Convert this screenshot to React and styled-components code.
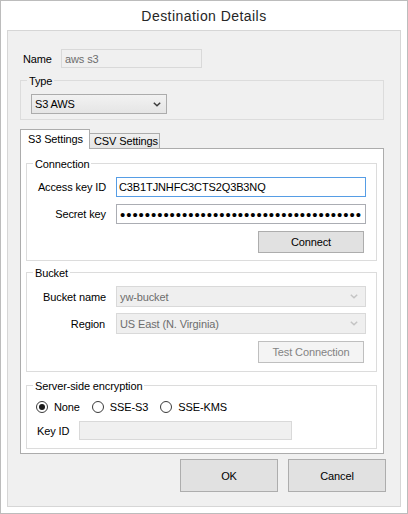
import React from 'react';
import styled, { createGlobalStyle } from 'styled-components';

const GlobalStyle = createGlobalStyle`
  html, body { margin: 0; padding: 0; background: #fff; }
  body {
    font-family: "Liberation Sans", Arial, sans-serif;
    font-size: 11px;
    letter-spacing: -0.12px;
    color: #000;
  }
  * { box-sizing: border-box; }
`;

const Window = styled.div`
  width: 408px;
  height: 514px;
  border: 1px solid #bcbcbc;
  background: #fff;
  display: flex;
  flex-direction: column;
`;

const TitleBar = styled.div`
  height: 29px;
  display: flex;
  align-items: center;
  justify-content: center;
  font-size: 14px;
  letter-spacing: 0.45px;
  color: #262626;
`;

const Body = styled.div`
  flex: 1;
  margin: 0 6px 6px;
  border: 1px solid #d6d6d6;
  background: #f0f0f0;
  display: flex;
  flex-direction: column;
  padding: 0 16px 0 12px;
`;

const NameRow = styled.div`
  display: flex;
  align-items: center;
  margin-top: 18px;
  padding-left: 3px;
`;

const NameLabel = styled.span`
  width: 38px;
`;

const TextBox = styled.div`
  width: ${p => p.$w}px;
  height: ${p => p.$h || 19}px;
  border: 1px solid ${p => (p.$focus ? '#569de5' : p.$disabled ? '#d9d9d9' : '#abadb3')};
  background: ${p => (p.$disabled ? '#f0f0f0' : '#fff')};
  color: ${p => (p.$disabled ? '#6d6d6d' : '#000')};
  display: flex;
  align-items: center;
  padding-left: ${p => p.$pl ?? 2}px;
  white-space: nowrap;
  overflow: hidden;
`;

const Dots = styled.span`
  font-size: 15px;
  letter-spacing: 0.95px;
  line-height: 1;
  margin-left: 1px;
`;

const Group = styled.fieldset`
  margin: ${p => p.$mt || 0}px 0 0;
  padding: 0;
  border: 1px solid #dcdcdc;
  min-width: 0;
`;

const Legend = styled.legend`
  margin-left: 6px;
  padding: 2px 2px 0;
  line-height: 14px;
  font-size: 11px;
`;

const GroupBody = styled.div`
  padding: ${p => p.$pad};
`;

const Select = styled.div`
  width: ${p => p.$w}px;
  height: ${p => p.$h}px;
  border: 1px solid ${p => (p.$disabled ? '#d9d9d9' : '#acacac')};
  background: ${p => (p.$disabled ? '#efefef' : 'linear-gradient(#f2f2f2, #e5e5e5)')};
  color: ${p => (p.$disabled ? '#6d6d6d' : '#000')};
  display: flex;
  align-items: center;
  justify-content: space-between;
  padding: 0 ${p => p.$pr || 5}px 0 3px;
  white-space: nowrap;
`;

const TabArea = styled.div`
  margin-top: 9px;
  display: flex;
  flex-direction: column;
`;

const TabStrip = styled.div`
  display: flex;
  align-items: flex-end;
  height: 19px;
`;

const Tab = styled.div`
  position: relative;
  z-index: ${p => (p.$active ? 1 : 0)};
  width: ${p => (p.$active ? 70 : 71)}px;
  height: ${p => (p.$active ? 20 : 15)}px;
  margin-bottom: ${p => (p.$active ? -1 : 0)}px;
  margin-left: ${p => (p.$active ? 0 : -1)}px;
  border: 1px solid #acacac;
  border-bottom: none;
  background: ${p => (p.$active ? '#fff' : 'linear-gradient(#f0f0f0, #e5e5e5)')};
  padding-left: ${p => (p.$active ? 7 : 4)}px;
  line-height: ${p => (p.$active ? 19 : 14)}px;
  white-space: nowrap;
`;

const TabPanel = styled.div`
  height: 306px;
  border: 1px solid #acacac;
  background: #fff;
  padding: 0 6px 0 5px;
  display: flex;
  flex-direction: column;
`;

const FormGrid = styled.div`
  display: grid;
  grid-template-columns: 79px 250px;
  column-gap: 10px;
  row-gap: ${p => p.$gap}px;
  align-items: center;
`;

const FieldLabel = styled.span`
  justify-self: end;
  margin-right: ${p => p.$mr || 0}px;
  white-space: nowrap;
`;

const Button = styled.div`
  width: ${p => p.$w}px;
  height: ${p => p.$h}px;
  border: 1px solid ${p => (p.$disabled ? '#bfbfbf' : '#adadad')};
  background: ${p => (p.$disabled ? '#f4f4f4' : '#e1e1e1')};
  color: ${p => (p.$disabled ? '#838383' : '#000')};
  display: flex;
  align-items: center;
  justify-content: center;
  white-space: nowrap;
`;

const GridButton = styled(Button)`
  grid-column: 2;
  justify-self: end;
  margin-right: 2px;
  margin-top: ${p => p.$mt || 0}px;
`;

const RadioRow = styled.div`
  display: flex;
  align-items: center;
  height: 14px;
  padding-left: 9px;
  gap: 12px;
`;

const RadioItem = styled.label`
  display: flex;
  align-items: center;
  gap: 6px;
`;

const RadioCircle = styled.span`
  width: 12px;
  height: 12px;
  border-radius: 50%;
  border: 1px solid #3a3a3a;
  background: #fff;
  display: flex;
  align-items: center;
  justify-content: center;
  &::after {
    content: '';
    display: ${p => (p.$checked ? 'block' : 'none')};
    width: 6px;
    height: 6px;
    border-radius: 50%;
    background: #1a1a1a;
  }
`;

const KeyRow = styled.div`
  display: flex;
  align-items: center;
  margin-top: 7px;
  padding-left: 10px;
`;

const KeyLabel = styled.span`
  width: 42px;
`;

const ButtonRow = styled.div`
  display: flex;
  justify-content: flex-end;
  gap: 10px;
  margin-top: 5px;
  margin-right: -2px;
`;

const Chevron = ({ color }) => (
  <svg width="8" height="5" viewBox="0 0 8 5">
    <path d="M0.8 0.8 L4 3.8 L7.2 0.8" fill="none" stroke={color} strokeWidth="1.5" />
  </svg>
);

const Radio = ({ checked, children }) => (
  <RadioItem>
    <RadioCircle $checked={checked} />
    <span>{children}</span>
  </RadioItem>
);

export default function App() {
  return (
    <>
      <GlobalStyle />
      <Window>
        <TitleBar>Destination Details</TitleBar>
        <Body>
          <NameRow>
            <NameLabel>Name</NameLabel>
            <TextBox $w={141} $disabled $pl={3}>aws s3</TextBox>
          </NameRow>

          <Group $mt={4}>
            <Legend>Type</Legend>
            <GroupBody $pad="6px 0 5px 10px">
              <Select $w={136} $h={20}>
                <span>S3 AWS</span>
                <Chevron color="#3c3c3c" />
              </Select>
            </GroupBody>
          </Group>

          <TabArea>
            <TabStrip>
              <Tab $active>S3 Settings</Tab>
              <Tab>CSV Settings</Tab>
            </TabStrip>
            <TabPanel>
              <Group $mt={6}>
                <Legend>Connection</Legend>
                <GroupBody $pad="6px 0 7px 0">
                  <FormGrid $gap={7}>
                    <FieldLabel>Access key ID</FieldLabel>
                    <TextBox $w={250} $h={20} $focus>C3B1TJNHFC3CTS2Q3B3NQ</TextBox>
                    <FieldLabel>Secret key</FieldLabel>
                    <TextBox $w={250} $h={20}>
                      <Dots>{'•'.repeat(39)}</Dots>
                    </TextBox>
                    <GridButton $w={106} $h={22}>Connect</GridButton>
                  </FormGrid>
                </GroupBody>
              </Group>

              <Group $mt={3}>
                <Legend>Bucket</Legend>
                <GroupBody $pad="6px 0 8px 0">
                  <FormGrid $gap={6}>
                    <FieldLabel>Bucket name</FieldLabel>
                    <Select $w={250} $h={21} $disabled $pr={7}>
                      <span>yw-bucket</span>
                      <Chevron color="#c4c4c4" />
                    </Select>
                    <FieldLabel $mr={1}>Region</FieldLabel>
                    <Select $w={250} $h={21} $disabled $pr={7}>
                      <span>US East (N. Virginia)</span>
                      <Chevron color="#c4c4c4" />
                    </Select>
                    <GridButton $w={106} $h={22} $disabled $mt={1}>Test Connection</GridButton>
                  </FormGrid>
                </GroupBody>
              </Group>

              <Group $mt={5}>
                <Legend>Server-side encryption</Legend>
                <GroupBody $pad="7px 0 8px 0">
                  <RadioRow>
                    <Radio checked>None</Radio>
                    <Radio>SSE-S3</Radio>
                    <Radio>SSE-KMS</Radio>
                  </RadioRow>
                  <KeyRow>
                    <KeyLabel>Key ID</KeyLabel>
                    <TextBox $w={213} $disabled />
                  </KeyRow>
                </GroupBody>
              </Group>
            </TabPanel>
          </TabArea>

          <ButtonRow>
            <Button $w={98} $h={33}>OK</Button>
            <Button $w={98} $h={33}>Cancel</Button>
          </ButtonRow>
        </Body>
      </Window>
    </>
  );
}
